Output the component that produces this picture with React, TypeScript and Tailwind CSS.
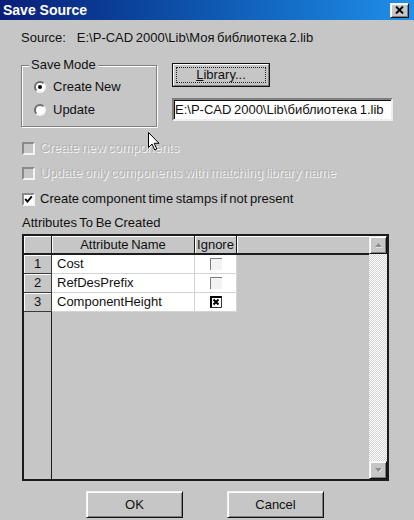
import React from 'react';

const raised =
  'border border-t-[#f2f2f2] border-l-[#f2f2f2] border-r-[#111] border-b-[#111] shadow-[inset_1px_1px_0_#fff,inset_-1px_-1px_0_#808080]';

function Radio({ checked }: { checked?: boolean }) {
  return (
    <span className="flex h-[12px] w-[12px] shrink-0 items-center justify-center rounded-full border-2 border-t-[#6e6e6e] border-l-[#6e6e6e] border-r-[#f4f4f4] border-b-[#f4f4f4] bg-white">
      {checked && <span className="h-[4px] w-[4px] rounded-full bg-black" />}
    </span>
  );
}

function CheckBox({ checked, disabled }: { checked?: boolean; disabled?: boolean }) {
  return (
    <span
      className={`flex h-[13px] w-[13px] shrink-0 items-center justify-center border-2 border-t-[#8a8a8a] border-l-[#8a8a8a] border-r-[#f4f4f4] border-b-[#f4f4f4] ${
        disabled ? 'bg-[#c6c6c6]' : 'bg-white'
      }`}
    >
      {checked && (
        <svg width="9" height="9" viewBox="0 0 9 9">
          <polyline points="1.2,4 3.5,6.6 7.8,1.4" fill="none" stroke="#000" strokeWidth="1.9" />
        </svg>
      )}
    </span>
  );
}

function CellCheck({ checked }: { checked?: boolean }) {
  return (
    <svg width="12" height="12" viewBox="0 0 12 12">
      {checked ? (
        <>
          <path d="M1 12 V1 H12" fill="none" stroke="#000" strokeWidth="2" />
          <path d="M0.5 11.5 H11.5 V0.5" fill="none" stroke="#333" strokeWidth="1" />
          <path d="M3.5 3.5 L8.5 8.5 M8.5 3.5 L3.5 8.5" stroke="#000" strokeWidth="2" />
        </>
      ) : (
        <>
          <rect x="1" y="1" width="11" height="11" fill="#f2f2f2" />
          <path d="M0.5 12 V0.5 H12" fill="none" stroke="#7c7c7c" strokeWidth="1" />
        </>
      )}
    </svg>
  );
}

function Arrow({ down }: { down?: boolean }) {
  return (
    <svg width="9" height="6" viewBox="0 0 9 6">
      {down ? (
        <>
          <polygon points="1,1 8,1 4.5,5" fill="#fff" transform="translate(0.6,0.6)" />
          <polygon points="1,1 8,1 4.5,5" fill="#8c8c8c" />
        </>
      ) : (
        <>
          <polygon points="4.5,1 8,5 1,5" fill="#fff" transform="translate(0.6,0.6)" />
          <polygon points="4.5,1 8,5 1,5" fill="#8c8c8c" />
        </>
      )}
    </svg>
  );
}

const rows = [
  { n: 1, name: 'Cost', ignore: false },
  { n: 2, name: 'RefDesPrefix', ignore: false },
  { n: 3, name: 'ComponentHeight', ignore: true },
];

// greyed-out option text, embossed like the old Windows look
const disabledText = 'text-[#b4b4b4] [text-shadow:1px_1px_0_#f6f6f6]';

export default function App() {
  return (
    <div className="relative h-[520px] w-[414px] overflow-hidden bg-[#c6c6c6] font-['Liberation_Sans',Arial,sans-serif] text-[13px] leading-[16px] text-[#111] [word-spacing:-1px]">
      {/* Title bar */}
      <div className="flex h-[20px] items-center justify-between bg-linear-to-r from-[#0a1e78] to-[#2090ea] pl-[3px] pr-[5px]">
        <span className="text-[14px] font-bold text-white [word-spacing:0]">Save Source</span>
        <span className={`flex h-[15px] w-[19px] items-center justify-center bg-[#c6c6c6] ${raised}`}>
          <svg width="9" height="8" viewBox="0 0 9 8">
            <path d="M1 0.5 L8 7.5 M8 0.5 L1 7.5" stroke="#000" strokeWidth="1.9" />
          </svg>
        </span>
      </div>

      {/* Source */}
      <div className="mt-[10px] flex pl-[21px]">
        <span>Source:</span>
        <span className="ml-[11px]">E:\P-CAD 2000\Lib\Моя библиотека 2.lib</span>
      </div>

      {/* Save mode + library */}
      <div className="mt-[11px] flex items-start">
        <div className="ml-[21px] w-[136px] pt-[8px]">
          <div className="relative h-[62px] border border-[#808080] shadow-[inset_1px_1px_0_#fff,1px_1px_0_#fff]">
            <span className="absolute -top-[9px] left-[7px] bg-[#c6c6c6] px-[2px]">Save Mode</span>
            <div className="flex flex-col gap-[7px] pl-[12px] pt-[13px]">
              <label className="flex h-[16px] items-center gap-[7px]">
                <Radio checked />
                <span>Create New</span>
              </label>
              <label className="flex h-[16px] items-center gap-[7px]">
                <Radio />
                <span>Update</span>
              </label>
            </div>
          </div>
        </div>
        <div className="ml-[15px] flex flex-col pt-[6px]">
          <button className="flex h-[24px] w-[98px] border border-[#111] bg-[#c6c6c6] p-0">
            <span className="flex flex-1 border border-t-[#fff] border-l-[#fff] border-r-[#808080] border-b-[#808080] p-[2px]">
              <span className="flex flex-1 items-center justify-center border border-dotted border-[#222]">
                <span>
                  <span className="underline">L</span>ibrary...
                </span>
              </span>
            </span>
          </button>
          <div className="mt-[11px] flex h-[23px] w-[221px] items-center border-2 border-t-[#808080] border-l-[#808080] border-r-[#efefef] border-b-[#efefef] bg-white shadow-[inset_1px_1px_0_#111]">
            <span className="pl-[1px]">E:\P-CAD 2000\Lib\библиотека 1.lib</span>
          </div>
        </div>
      </div>

      {/* Options */}
      <div className="mt-[13px] flex h-[16px] items-center gap-[5px] pl-[22px]">
        <CheckBox disabled />
        <span className={disabledText}>Create new components</span>
      </div>
      <div className="mt-[9px] flex h-[16px] items-center gap-[5px] pl-[22px]">
        <CheckBox disabled />
        <span className={disabledText}>Update only components with matching library name</span>
      </div>
      <div className="mt-[10px] flex h-[16px] items-center gap-[5px] pl-[22px]">
        <CheckBox checked />
        <span>Create component time stamps if not present</span>
      </div>

      <div className="mt-[8px] pl-[22px]">Attributes To Be Created</div>

      {/* Grid */}
      <div className="ml-[22px] mt-[3px] flex h-[247px] w-[367px] border-2 border-[#1c1c1c]">
        <div className="flex flex-1 flex-col">
          <div className="flex h-[19px] border-b-2 border-[#1c1c1c]">
            <div className="w-[28px] border-r border-[#1c1c1c] shadow-[inset_1px_1px_0_#fff]" />
            <div className="flex w-[143px] items-center justify-center border-r border-[#1c1c1c] shadow-[inset_1px_1px_0_#fff]">
              Attribute Name
            </div>
            <div className="flex w-[42px] items-center justify-center border-r border-[#1c1c1c] shadow-[inset_1px_1px_0_#fff]">
              Ignore
            </div>
            <div className="flex-1 shadow-[inset_1px_1px_0_#fff]" />
          </div>
          {rows.map((r) => (
            <div key={r.n} className="flex h-[19px]">
              <div className="flex w-[28px] items-center justify-center border-r border-b border-[#3a3a3a] shadow-[inset_1px_1px_0_#fff]">
                {r.n}
              </div>
              <div className="flex w-[143px] items-center border-r border-b border-[#d4d4d4] bg-white pl-[5px]">
                {r.name}
              </div>
              <div className="flex w-[42px] items-center justify-center border-r border-b border-[#d4d4d4] bg-white">
                <CellCheck checked={r.ignore} />
              </div>
              <div className="flex-1" />
            </div>
          ))}
          <div className="flex flex-1">
            <div className="w-[28px] border-r border-[#1c1c1c]" />
          </div>
        </div>
        <div className="flex w-[18px] flex-col">
          <div className={`flex h-[18px] items-center justify-center bg-[#c6c6c6] ${raised}`}>
            <Arrow />
          </div>
          <div className="flex-1 bg-[repeating-conic-gradient(#ffffff_0%_25%,#d2d2d2_0%_50%)] bg-[length:2px_2px]" />
          <div className={`flex h-[18px] items-center justify-center bg-[#c6c6c6] ${raised}`}>
            <Arrow down />
          </div>
        </div>
      </div>

      {/* Buttons */}
      <div className="mt-[10px] flex">
        <button className={`ml-[86px] flex h-[27px] w-[97px] items-center justify-center bg-[#c6c6c6] ${raised}`}>OK</button>
        <button className={`ml-[44px] flex h-[27px] w-[97px] items-center justify-center bg-[#c6c6c6] ${raised}`}>Cancel</button>
      </div>

      {/* Mouse pointer */}
      <svg className="absolute left-[148px] top-[132px]" width="12" height="19" viewBox="0 0 12 19">
        <path d="M0.5 0.5 V15.5 L4 12 L6.8 18 L8.8 17 L6.2 11.3 L11 11.3 Z" fill="#fff" stroke="#000" strokeWidth="1" />
      </svg>
    </div>
  );
}
